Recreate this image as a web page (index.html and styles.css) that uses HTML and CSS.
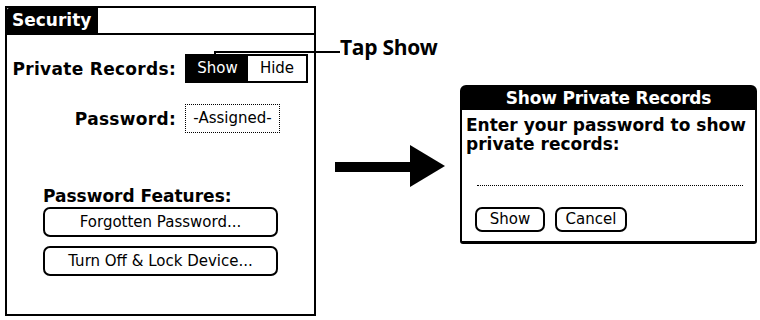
FILE: index.html
```html
<!DOCTYPE html>
<html>
<head>
<meta charset="utf-8">
<link rel="stylesheet" href="styles.css">
</head>
<body>
<div class="page">
  <div class="device">
    <div class="titlebar"><span class="tab">Security</span></div>
    <div class="body">
      <div class="grid">
        <div class="label">Private Records:</div>
        <div class="seg"><span class="seg-item on">Show</span><span class="seg-item">Hide</span></div>
        <div class="label">Password:</div>
        <div class="pw">-Assigned-</div>
      </div>
      <div class="features">
        <div class="flabel">Password Features:</div>
        <div class="btn wide">Forgotten Password...</div>
        <div class="btn wide">Turn Off &amp; Lock Device...</div>
      </div>
    </div>
  </div>
  <div class="arrow">
    <svg width="110" height="42" viewBox="0 0 110 42"><rect x="0" y="17" width="76" height="10" fill="#000"/><polygon points="75,0 110,21 75,42" fill="#000"/></svg>
  </div>
  <div class="dialog">
    <div class="dtitle">Show Private Records</div>
    <div class="dbody">
      <div class="dtext">Enter your password to show private records:</div>
      <div class="dfield"></div>
      <div class="dbtns"><span class="btn small">Show</span><span class="btn small">Cancel</span></div>
    </div>
  </div>
  <div class="callout"></div>
  <div class="callout-text">Tap Show</div>
</div>
</body>
</html>
```
FILE: styles.css
```css
html, body { margin: 0; padding: 0; background: #fff; }
body { width: 760px; height: 320px; overflow: hidden; }
.page {
  position: relative;
  display: flex;
  align-items: flex-start;
  padding: 6px 0 0 5px;
  font-family: "DejaVu Sans", sans-serif;
  color: #000;
}
.device {
  width: 307px;
  height: 306px;
  border: 2px solid #000;
  display: flex;
  flex-direction: column;
}
.titlebar {
  height: 25px;
  border-bottom: 2px solid #000;
  display: flex;
}
.tab {
  background: #000;
  color: #fff;
  font-weight: bold;
  font-size: 17px;
  line-height: 25px;
  padding: 0 5px;
  width: 81px;
  border-top-left-radius: 2px;
}
.body { flex: 1; }
.grid {
  display: grid;
  grid-template-columns: 169px auto;
  column-gap: 8px;
  row-gap: 21px;
  margin-top: 19px;
  align-items: center;
  justify-items: start;
}
.label {
  justify-self: end;
  font-weight: bold;
  font-size: 17px;
  letter-spacing: 0.3px;
}
.seg {
  display: flex;
  border: 2px solid #000;
  height: 25px;
  margin-left: 1px;
}
.seg-item {
  font-size: 15px;
  line-height: 25px;
  width: 58px;
  text-align: center;
}
.seg-item.on { background: #000; color: #fff; width: 61px; }
.pw {
  border: 1px dotted #000;
  height: 27px;
  width: 93px;
  font-size: 15px;
  line-height: 27px;
  text-align: center;
  margin-left: 1px;
}
.features {
  margin: 54px 0 0 36px;
  display: flex;
  flex-direction: column;
  gap: 9px;
}
.flabel { font-weight: bold; font-size: 17px; line-height: 18px; margin-bottom: -7px; }
.btn {
  border: 2px solid #000;
  border-radius: 7px;
  font-size: 15px;
  text-align: center;
  box-sizing: border-box;
}
.btn.wide { width: 235px; height: 30px; line-height: 26px; }
.arrow { margin: 139px 0 0 19px; height: 42px; }
.arrow svg { display: block; }
.dialog {
  margin: 79px 0 0 15px;
  width: 297px;
  height: 159px;
  box-sizing: border-box;
  border: 2px solid #000;
  border-bottom-width: 3px;
  border-radius: 6px 6px 3px 3px;
  display: flex;
  flex-direction: column;
}
.dtitle {
  background: #000;
  color: #fff;
  font-weight: bold;
  font-size: 17px;
  height: 23px;
  line-height: 22px;
  text-align: center;
  letter-spacing: -0.2px;
}
.dbody { padding: 6px 4px 0 4px; }
.dtext { font-weight: bold; font-size: 17px; line-height: 19px; }
.dfield { margin: 31px 8px 0 11px; border-top: 1px dotted #000; }
.dbtns { display: flex; gap: 10px; margin: 21px 0 0 9px; }
.btn.small { height: 25px; line-height: 21px; width: 70px; display: inline-block; }
.btn.small + .btn.small { width: 72px; }
.callout {
  position: absolute;
  left: 214px;
  top: 51px;
  width: 124px;
  height: 4px;
  border-top: 2px solid #000;
  border-left: 2px solid #000;
}
.callout-text {
  position: absolute;
  left: 340px;
  top: 33px;
  font-family: "Open Sans", sans-serif;
  font-weight: bold;
  font-size: 21px;
  letter-spacing: -0.3px;
}
```
